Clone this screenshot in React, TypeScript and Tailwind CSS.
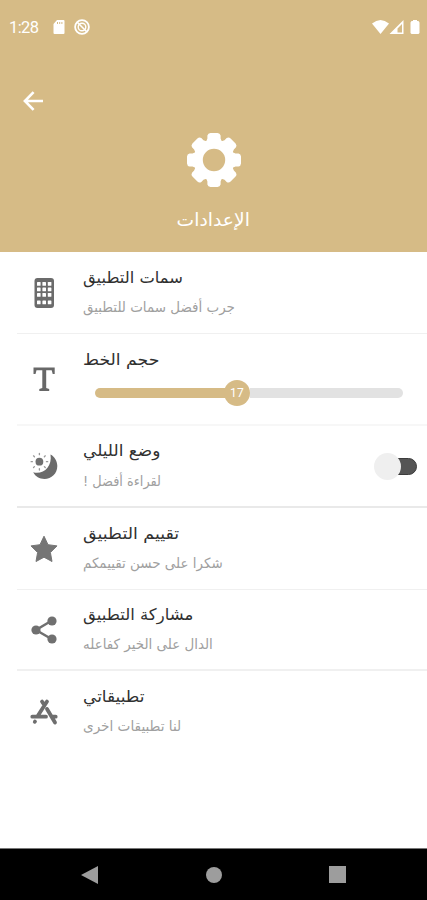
import React, { FC, ReactNode } from 'react'

const GearIcon: FC = () => (
  <svg className="w-[54px] h-[54px]" viewBox="-27 -27 54 54" fill="white">
    <path
      fillRule="evenodd"
      d="M0-20.500a20.500 20.500 0 1 0 0 41a20.500 20.500 0 1 0 0-41zM0-11.200a11.200 11.200 0 1 1 0 22.400a11.200 11.200 0 1 1 0-22.400z"
    />
    {[0, 45, 90, 135, 180, 225, 270, 315].map((angle) => (
      <path
        key={angle}
        transform={`rotate(${angle})`}
        d="M-8-18L-6.600-21.500V-24.500Q-6-26.800-3.500-27H3.500Q6-26.800 6.600-24.500V-21.500L8-18Z"
      />
    ))}
  </svg>
)

const PhoneIcon: FC = () => (
  <svg className="w-7 h-[30px]" viewBox="0 0 28 30">
    <rect x="4.500" y="0" width="19.500" height="30" rx="3" fill="#6b6b6b" />
    {[4.500, 10, 15.500, 23].map((y) =>
      [7, 12.400, 17.800].map((x) => (
        <rect
          key={`${x}-${y}`}
          x={x}
          y={y - 0.5}
          width="3.600"
          height="3.800"
          rx="0.6"
          fill="white"
        />
      ))
    )}
  </svg>
)

const LetterIcon: FC = () => (
  <svg className="w-7 h-7" viewBox="0 0 28 28" fill="#686868">
    <path d="M3.500 2.500H24.700V9H22.700L21.700 5.300H16.200V23L19.200 24V26H9.300V24L12.300 23V5.300H6.500L5.500 9H3.500Z" />
  </svg>
)

const NightIcon: FC = () => (
  <svg className="w-7 h-7" viewBox="0 0 28 28">
    <path
      d="M20.500 2.500C24.500 4.500 27.300 9 27.300 14C27.300 21.500 21.500 27 14.500 27C9.500 27 5.500 24.800 3.200 20.300C13 23 22.500 15 20.500 2.500Z"
      fill="#6b6b6b"
    />
    <circle cx="9.400" cy="9.700" r="3.900" fill="#707070" />
    <g stroke="#999" strokeWidth="1.300" strokeLinecap="round">
      {[0, 45, 90, 135, 180, 225, 270, 315].map((angle) => (
        <path
          key={angle}
          transform={`translate(9.400 9.700) rotate(${angle})`}
          d="M0-7V-8.300"
        />
      ))}
    </g>
  </svg>
)

const StarIcon: FC = () => (
  <svg className="w-7 h-7" viewBox="0 0 28 28">
    <path
      d="M14 1.200L18 9.700L27 10.900L20.400 17.500L22 26.500L14 22.200L6 26.500L7.600 17.500L1 10.900L10 9.700Z"
      fill="#757575"
      stroke="#757575"
      strokeLinejoin="round"
    />
  </svg>
)

const ShareIcon: FC = () => (
  <svg className="w-7 h-7" viewBox="0 0 28 28" fill="#707070">
    <path
      d="M21.500 4.800L6 14L21.500 23"
      fill="none"
      stroke="#707070"
      strokeWidth="2.500"
    />
    <circle cx="22" cy="5" r="4.600" />
    <circle cx="6" cy="14" r="4.600" />
    <circle cx="22" cy="23" r="4.600" />
  </svg>
)

const StoreIcon: FC = () => (
  <svg
    className="w-7 h-7"
    viewBox="0 0 28 28"
    fill="none"
    stroke="#6e6e6e"
    strokeWidth="3.800"
    strokeLinecap="round"
  >
    <path d="M17 3.500L8 17.500M12 3.500L13.500 5.800M17 11L25 24.500M2.300 18.700H16M23 18.700H25.700M4.800 23.800L5 23.500" />
  </svg>
)

const Slider: FC = () => (
  <div className="flex items-center h-[26px] ml-3 mt-[7px] w-[308px]">
    <div className="h-[10px] w-[140px] -mr-[11px] rounded-l-full bg-[#d6bb86]" />
    <div className="flex items-center justify-center w-[26px] h-[26px] rounded-full bg-[#d6bb86] text-white text-[12px] tracking-wide font-[Roboto,sans-serif] shrink-0">
      17
    </div>
    <div className="h-[10px] grow rounded-r-full bg-[#e2e2e2]" />
  </div>
)

const Toggle: FC = () => (
  <div className="flex items-center mr-[10px]">
    <div className="w-[27px] h-[27px] rounded-full bg-[#efefef] z-10" />
    <div className="w-[20px] h-[17px] -ml-[4px] rounded-r-full border border-[#3c3c3c] bg-[#555]" />
  </div>
)

interface RowProps {
  icon: ReactNode
  title: string
  subtitle?: string
  titleClass: string
  subtitleClass?: string
  rowClass: string
  children?: ReactNode
  end?: ReactNode
}

const Row: FC<RowProps> = ({
  icon,
  title,
  subtitle,
  titleClass,
  subtitleClass,
  rowClass,
  children,
  end,
}) => (
  <div className={`flex items-center ml-[17px] pl-[13px] ${rowClass}`}>
    <div className="w-7 shrink-0">{icon}</div>
    <div className="grow ml-[25px] whitespace-nowrap">
      <div className="h-[30px] flex items-center">
        <span
          dir="rtl"
          className={`inline-block origin-left text-[#303030] ${titleClass}`}
        >
          {title}
        </span>
      </div>
      {subtitle && (
        <div className="h-[30px] flex items-center">
          <span
            dir="rtl"
            className={`inline-block origin-left text-[#a0a0a0] ${subtitleClass}`}
          >
            {subtitle}
          </span>
        </div>
      )}
      {children}
    </div>
    {end}
  </div>
)

const StatusBar: FC = () => (
  <div className="flex items-center h-[54px] pl-[9px] pr-[6px] font-[Roboto,sans-serif]">
    <span className="text-[16.500px] w-[30px] tracking-[-0.6px] pt-[2px]">
      1:28
    </span>
    <svg className="ml-[14px] w-3 h-[14px]" viewBox="0 0 12 14" fill="white">
      <path d="M4 0H10.500Q11.500 0 11.500 1V13Q11.500 14 10.500 14H1.500Q.5 14 .5 13V4Z" />
      <path d="M4.500 2V4M6.700 2V4M8.900 2V4" stroke="#d6bb86" />
    </svg>
    <svg
      className="ml-[9px] w-4 h-4"
      viewBox="0 0 16 16"
      fill="none"
      stroke="white"
    >
      <circle cx="8" cy="8" r="6.900" strokeWidth="1.800" />
      <circle cx="8" cy="8" r="3.800" strokeWidth="1.400" />
      <path d="M3 3L13 13" strokeWidth="1.600" />
    </svg>
    <div className="grow" />
    <svg className="w-[17px] h-[14px]" viewBox="0 0 17 14" fill="white">
      <path d="M0 3.500Q8.500-3.500 17 3.500L8.500 14Z" />
    </svg>
    <svg className="w-[15px] h-[14px]" viewBox="0 0 15 14">
      <path
        fillRule="evenodd"
        d="M14.500 0V14H.5ZM13 4L8.500 8.500V12.500H13Z"
        fill="white"
      />
    </svg>
    <svg className="ml-[6px] mr-[1px] w-[10px] h-[14px]" viewBox="0 0 10 14">
      <path
        d="M3 0H7V1H8.500L9.500 2.500V13L8.500 14H1.500L.5 13V2.500L1.500 1H3Z"
        fill="white"
      />
    </svg>
  </div>
)

const NavBar: FC = () => (
  <div className="flex items-center h-[52px] px-[81px] justify-between bg-black border-t border-[#777]">
    <svg className="w-[17px] h-[18px]" viewBox="0 0 17 18" fill="#9d9d9d">
      <path d="M0 9L17 0V18Z" />
    </svg>
    <div className="w-4 h-4 rounded-full bg-[#9d9d9d]" />
    <div className="w-[17px] h-[17px] bg-[#9d9d9d]" />
  </div>
)

const App: FC = () => {
  return (
    <div className="flex flex-col w-full h-[900px] bg-white overflow-hidden font-['DejaVu_Sans',sans-serif]">
      <header className="h-[252px] bg-[#d6bb86] text-white">
        <StatusBar />
        <div className="pl-[23px] pt-[37px]">
          <svg
            className="w-5 h-5"
            viewBox="0 0 20 20"
            fill="none"
            stroke="white"
            strokeWidth="2.600"
          >
            <path d="M20 10H2.500M10.600 1.200L1.900 10L10.600 18.800" />
          </svg>
        </div>
        <div className="flex flex-col items-center mt-[22px]">
          <GearIcon />
          <h1
            dir="rtl"
            className="mt-[18px] h-[30px] leading-[30px] text-[18px] scale-x-[1.04]"
          >
            الإعدادات
          </h1>
        </div>
      </header>
      <main className="grow">
        <Row
          icon={<PhoneIcon />}
          title="سمات التطبيق"
          titleClass="text-[16px] scale-x-[1.02]"
          subtitle="جرب أفضل سمات للتطبيق"
          subtitleClass="text-[14px] scale-x-[0.96]"
          rowClass="h-[82px] border-b border-[#f0f0f0]"
        />
        <Row
          icon={<LetterIcon />}
          title="حجم الخط"
          titleClass="text-[16px] scale-x-[1.08]"
          rowClass="h-[92px] border-b-2 border-[#f7f7f7]"
        >
          <div className="-mt-[2px] mb-[7px]">
            <Slider />
          </div>
        </Row>
        <Row
          icon={<NightIcon />}
          title="وضع الليلي"
          titleClass="text-[16px] scale-x-[1.06]"
          subtitle="لقراءة أفضل !"
          subtitleClass="text-[14px] scale-x-[0.92]"
          rowClass="h-[82px] border-b-2 border-[#e9e9e9]"
          end={<Toggle />}
        />
        <Row
          icon={<StarIcon />}
          title="تقييم التطبيق"
          titleClass="text-[16px] scale-x-[1.09]"
          subtitle="شكرا على حسن تقييمكم"
          subtitleClass="text-[14px] scale-x-[0.96]"
          rowClass="h-[82px] border-b border-[#f0f0f0]"
        />
        <Row
          icon={<ShareIcon />}
          title="مشاركة التطبيق"
          titleClass="text-[16px] scale-x-[1.03]"
          subtitle="الدال على الخير كفاعله"
          subtitleClass="text-[14px] scale-x-[0.96]"
          rowClass="h-[81px] border-b-2 border-[#f0f0f0]"
        />
        <Row
          icon={<StoreIcon />}
          title="تطبيقاتي"
          titleClass="text-[16px] scale-x-[1.06]"
          subtitle="لنا تطبيقات اخرى"
          subtitleClass="text-[14px] scale-x-[0.97]"
          rowClass="h-[81px]"
        />
      </main>
      <NavBar />
    </div>
  )
}

export default App
